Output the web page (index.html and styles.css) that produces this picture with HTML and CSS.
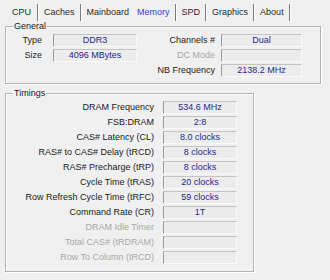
FILE: index.html
```html
<!DOCTYPE html>
<html>
<head>
<meta charset="utf-8">
<link rel="stylesheet" href="styles.css">
</head>
<body>
<div class="tabs">
  <div class="tab tab-first">CPU</div>
  <div class="tab">Caches</div>
  <div class="tab tab-before-active">Mainboard</div>
  <div class="tab active">Memory</div>
  <div class="tab">SPD</div>
  <div class="tab">Graphics</div>
  <div class="tab">About</div>
</div>

<fieldset class="group general">
  <legend>General</legend>
  <div class="general-grid">
    <div class="lbl l1 r1">Type</div>
    <div class="fld f1 r1">DDR3</div>
    <div class="lbl l1 r2">Size</div>
    <div class="fld f1 r2">4096 MBytes</div>
    <div class="lbl l2 r1">Channels #</div>
    <div class="fld f2 r1">Dual</div>
    <div class="lbl l2 r2 dis">DC Mode</div>
    <div class="fld f2 r2"></div>
    <div class="lbl l2 r3">NB Frequency</div>
    <div class="fld f2 r3">2138.2 MHz</div>
  </div>
</fieldset>

<fieldset class="group timings">
  <legend>Timings</legend>
  <div class="timing-grid">
    <div class="lbl">DRAM Frequency</div><div class="fld">534.6 MHz</div>
    <div class="lbl">FSB:DRAM</div><div class="fld">2:8</div>
    <div class="lbl">CAS# Latency (CL)</div><div class="fld">8.0 clocks</div>
    <div class="lbl">RAS# to CAS# Delay (tRCD)</div><div class="fld">8 clocks</div>
    <div class="lbl">RAS# Precharge (tRP)</div><div class="fld">8 clocks</div>
    <div class="lbl">Cycle Time (tRAS)</div><div class="fld">20 clocks</div>
    <div class="lbl">Row Refresh Cycle Time (tRFC)</div><div class="fld">59 clocks</div>
    <div class="lbl">Command Rate (CR)</div><div class="fld">1T</div>
    <div class="lbl dis">DRAM Idle Timer</div><div class="fld"></div>
    <div class="lbl dis">Total CAS# (tRDRAM)</div><div class="fld"></div>
    <div class="lbl dis">Row To Column (tRCD)</div><div class="fld"></div>
  </div>
</fieldset>
</body>
</html>
```
FILE: styles.css
```css
html, body {
  margin: 0;
  padding: 0;
  background: #f0f0f0;
}
body {
  width: 330px;
  height: 280px;
  overflow: hidden;
  font-family: "Liberation Sans", Arial, sans-serif;
  font-size: 9px;
  color: #1a1a1a;
}
.tabs {
  display: flex;
  height: 21px;
  box-sizing: border-box;
  padding: 4px 0 0 7px;
}
.tab {
  line-height: 17px;
  height: 17px;
  padding: 0 5px;
  border-right: 1px solid #7c7c7c;
  box-shadow: 1px 0 0 #ffffff;
  margin-right: 1px;
  color: #2a2a2a;
}
.tab-first {
  padding-right: 6px;
}
.tab-before-active {
  border-right: none;
  box-shadow: none;
  margin-right: 0;
}
.active {
  color: #3a3ad6;
  padding: 0 5px 0 3px;
}
.group {
  margin: 0;
  padding: 0;
  border: 1px solid #b4b4b4;
  box-shadow: inset 1px 1px 0 #ffffff, 1px 1px 0 #ffffff;
  min-width: 0;
}
.group legend {
  margin-left: 7px;
  padding: 0 1px;
  line-height: 11px;
  font-size: 9px;
  color: #1a1a1a;
  background: #f0f0f0;
}
.general {
  margin: 0 9px 0 5px;
  padding: 2px 0 6px 0;
}
.timings {
  margin: 4px 76px 0 5px;
  padding: 2px 0 7px 0;
}
.general-grid {
  display: grid;
  grid-template-columns: 47px 84px 84px 81px;
  grid-template-rows: 13px 13px 13px;
  row-gap: 2px;
}
.lbl {
  line-height: 13px;
  text-align: right;
  white-space: nowrap;
}
.general-grid .l1 { grid-column: 1; padding-right: 11px; }
.general-grid .l2 { grid-column: 3; padding-right: 6px; }
.general-grid .f1 { grid-column: 2; }
.general-grid .f2 { grid-column: 4; }
.r1 { grid-row: 1; }
.r2 { grid-row: 2; }
.r3 { grid-row: 3; }
.dis { color: #a8a8a8; }
.fld {
  box-sizing: border-box;
  height: 13px;
  line-height: 11px;
  text-align: center;
  color: #27278a;
  background: #ececec;
  border-top: 1px solid #c4c4c4;
  border-left: 1px solid #9c9c9c;
  border-bottom: 1px solid #fafafa;
  border-right: 1px solid #fafafa;
  white-space: nowrap;
}
.timing-grid {
  display: grid;
  grid-template-columns: 148px 74px;
  column-gap: 9px;
  grid-auto-rows: 13px;
  row-gap: 2px;
}
```
